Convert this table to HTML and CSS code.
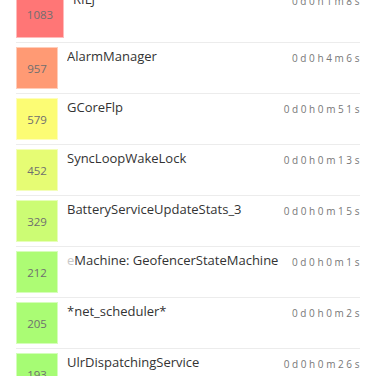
FILE: index.html
```html
<!DOCTYPE html>
<html>
<head>
<meta charset="utf-8">
<link rel="stylesheet" href="styles.css">
</head>
<body>
<div class="list">
  <div class="row first">
    <div class="count wide" style="background:#ff7676">1083</div>
    <div class="name">RILJ</div>
    <div class="time">0d0h1m8s</div>
  </div>
  <div class="row">
    <div class="count" style="background:#ff9a74">957</div>
    <div class="name">AlarmManager</div>
    <div class="time">0d0h4m6s</div>
  </div>
  <div class="row">
    <div class="count" style="background:#fcfc74">579</div>
    <div class="name">GCoreFlp</div>
    <div class="time">0d0h0m51s</div>
  </div>
  <div class="row">
    <div class="count" style="background:#e6fc74">452</div>
    <div class="name">SyncLoopWakeLock</div>
    <div class="time">0d0h0m13s</div>
  </div>
  <div class="row">
    <div class="count" style="background:#ccfc74">329</div>
    <div class="name">BatteryServiceUpdateStats_3</div>
    <div class="time">0d0h0m15s</div>
  </div>
  <div class="row">
    <div class="count" style="background:#adfc74">212</div>
    <div class="name"><span class="fade">e</span>Machine: GeofencerStateMachine</div>
    <div class="time">0d0h0m1s</div>
  </div>
  <div class="row">
    <div class="count" style="background:#aafc74">205</div>
    <div class="name">*net_scheduler*</div>
    <div class="time">0d0h0m2s</div>
  </div>
  <div class="row">
    <div class="count" style="background:#a6fc74">193</div>
    <div class="name">UlrDispatchingService</div>
    <div class="time">0d0h0m26s</div>
  </div>
</div>
</body>
</html>
```

FILE: styles.css
```css
html, body {
  margin: 0;
  padding: 0;
  background: #fff;
  overflow: hidden;
}
body {
  font-family: "Open Sans", "DejaVu Sans", sans-serif;
  width: 376px;
  height: 376px;
}
.list {
  margin: -14px 16px 0 16px;
}
.row {
  display: flex;
  align-items: flex-start;
  padding: 4px 0 4px 0;
  border-bottom: 1px solid #ececec;
}
.count {
  box-sizing: border-box;
  min-width: 42px;
  height: 42px;
  border: 1px solid rgba(255,255,255,0.5);
  display: flex;
  align-items: center;
  justify-content: center;
  font-size: 11.5px;
  color: #6f6f6f;
  padding-top: 1px;
}
.count.wide {
  width: 48px;
  height: 48px;
}
.name {
  flex: 1;
  margin-left: 9px;
  font-size: 13px;
  line-height: 18px;
  color: #333;
  white-space: nowrap;
  overflow: hidden;
}
.fade {
  color: #c8c8c8;
}
.time {
  margin-top: 3px;
  font-size: 10px;
  line-height: 16px;
  letter-spacing: 2.6px;
  margin-right: -2px;
  color: #777;
  white-space: nowrap;
  padding-left: 12px;
}
```
